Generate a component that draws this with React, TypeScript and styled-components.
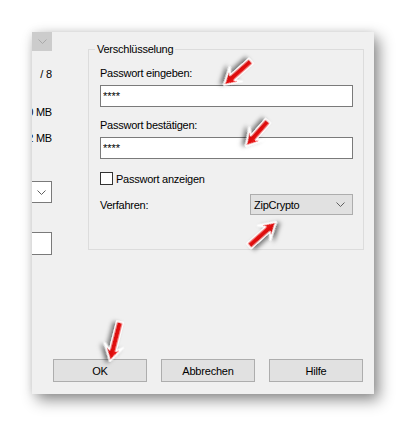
import * as React from 'react';
import styled, { createGlobalStyle } from 'styled-components';

const GlobalStyle = createGlobalStyle`
    html, body {
        margin: 0;
        padding: 0;
        background: #ffffff;
    }
    body {
        font-family: "Liberation Sans", Arial, sans-serif;
        font-size: 11px;
        color: #000000;
    }
`;

const Page = styled.div`
    position: relative;
    width: 406px;
    height: 426px;
    box-sizing: border-box;
    padding: 32px 0 0 32px;
    background: #ffffff;
    overflow: hidden;
`;

const Dialog = styled.div`
    width: 342px;
    height: 362px;
    display: flex;
    flex-direction: column;
    background: #f0f0f0;
    box-shadow: 5px 6px 14px rgba(0, 0, 0, 0.45), 0 0 8px rgba(0, 0, 0, 0.08);
`;

const TopArea = styled.div`
    display: flex;
    flex-direction: row;
    align-items: flex-start;
    gap: 36px;
`;

const LeftColumn = styled.div`
    width: 20px;
    flex-shrink: 0;
    display: flex;
    flex-direction: column;
    align-items: flex-end;
    overflow: hidden;
`;

const DisabledDrop = styled.div`
    width: 20px;
    height: 19px;
    display: flex;
    align-items: center;
    justify-content: center;
    background: #cccccc;
`;

const SideText = styled.div<{ $top: number }>`
    margin-top: ${(p) => p.$top}px;
    line-height: 14px;
    white-space: nowrap;
    letter-spacing: -0.2px;
`;

const SideCombo = styled.div<{ $top: number }>`
    margin-top: ${(p) => p.$top}px;
    width: 60px;
    height: 22px;
    box-sizing: border-box;
    display: flex;
    align-items: center;
    justify-content: flex-end;
    padding-right: 5px;
    background: #ffffff;
    border: 1px solid #7a7a7a;
`;

const SideField = styled.div<{ $top: number }>`
    margin-top: ${(p) => p.$top}px;
    width: 60px;
    height: 23px;
    box-sizing: border-box;
    background: #ffffff;
    border: 1px solid #7a7a7a;
`;

const GroupBox = styled.fieldset`
    margin: 10px 0 0 0;
    width: 276px;
    min-width: 0;
    box-sizing: border-box;
    border: 1px solid #dcdcdc;
    padding: 10px 10px 34px 11px;
    display: flex;
    flex-direction: column;
`;

const GroupTitle = styled.legend`
    margin-left: -5px;
    padding: 0 2px;
    line-height: 14px;
    font-size: 11px;
    letter-spacing: -0.25px;
`;

const FieldLabel = styled.div<{ $top?: number }>`
    margin-top: ${(p) => p.$top ?? 0}px;
    line-height: 14px;
    white-space: nowrap;
    letter-spacing: -0.25px;
`;

const PasswordBox = styled.input`
    margin: 5px 0 0 0;
    width: 100%;
    height: 22px;
    box-sizing: border-box;
    padding: 0 2px;
    border: 1px solid #7a7a7a;
    background: #ffffff;
    font-family: "Liberation Sans", Arial, sans-serif;
    font-size: 11px;
    color: #000000;
    outline: none;
`;

const CheckRow = styled.label`
    margin-top: 13px;
    display: flex;
    align-items: center;
    gap: 3px;
    height: 13px;
    white-space: nowrap;
    letter-spacing: -0.25px;
`;

const CheckBox = styled.span`
    width: 13px;
    height: 13px;
    box-sizing: border-box;
    border: 1px solid #333333;
    background: #ffffff;
`;

const MethodRow = styled.div`
    margin-top: 9px;
    display: flex;
    align-items: center;
    justify-content: space-between;
    letter-spacing: -0.25px;
`;

const Select = styled.div`
    width: 103px;
    height: 21px;
    box-sizing: border-box;
    display: flex;
    align-items: center;
    justify-content: space-between;
    padding: 0 7px 0 3px;
    background: #e1e1e1;
    border: 1px solid #adadad;
`;

const ButtonRow = styled.div`
    margin-top: auto;
    display: flex;
    flex-direction: row;
    gap: 14px;
    padding: 0 0 12px 21px;
`;

const Button = styled.button`
    width: 94px;
    height: 23px;
    box-sizing: border-box;
    padding: 0;
    background: #e1e1e1;
    border: 1px solid #adadad;
    font-family: "Liberation Sans", Arial, sans-serif;
    font-size: 11px;
    color: #000000;
    letter-spacing: -0.2px;
`;

const Overlay = styled.svg`
    position: absolute;
    left: 0;
    top: 0;
    pointer-events: none;
`;

const Chevron = ({ color = '#606060' }: { color?: string }) => (
    <svg width="9" height="5" viewBox="0 0 9 5">
        <polyline points="0.5,0.5 4.5,4.5 8.5,0.5" fill="none" stroke={color} strokeWidth="1" />
    </svg>
);

type ArrowSpec = { tail: [number, number]; tip: [number, number] };

const arrows: ArrowSpec[] = [
    { tail: [251, 61], tip: [224, 85] },
    { tail: [268, 121], tip: [246, 146] },
    { tail: [249, 246], tip: [276, 222] },
    { tail: [120, 322], tip: [110, 361] },
];

const RedArrow = ({ tail, tip }: ArrowSpec) => {
    const dx = tip[0] - tail[0];
    const dy = tip[1] - tail[1];
    const len = Math.sqrt(dx * dx + dy * dy);
    const angle = (Math.atan2(dy, dx) * 180) / Math.PI;
    const pts = [
        [0, -3.3],
        [len - 11, -3.3],
        [len - 16, -9.5],
        [len, 0],
        [len - 16, 9.5],
        [len - 11, 3.3],
        [0, 3.3],
    ]
        .map((p) => p.join(','))
        .join(' ');
    return (
        <g transform={`translate(${tail[0]} ${tail[1]}) rotate(${angle})`} filter="url(#arrowShadow)">
            <polygon points={pts} fill="url(#arrowRed)" stroke="#ffffff" strokeWidth="1.6" strokeLinejoin="round" />
        </g>
    );
};

export default function App() {
    return (
        <>
            <GlobalStyle />
            <Page>
                <Dialog>
                    <TopArea>
                        <LeftColumn>
                            <DisabledDrop>
                                <Chevron color="#a9a9a9" />
                            </DisabledDrop>
                            <SideText $top={16}>/ 8</SideText>
                            <SideText $top={24}>0 MB</SideText>
                            <SideText $top={12}>2 MB</SideText>
                            <SideCombo $top={36}>
                                <Chevron />
                            </SideCombo>
                            <SideField $top={29} />
                        </LeftColumn>
                        <GroupBox>
                            <GroupTitle>Verschlüsselung</GroupTitle>
                            <FieldLabel>Passwort eingeben:</FieldLabel>
                            <PasswordBox readOnly value="****" />
                            <FieldLabel $top={11}>Passwort bestätigen:</FieldLabel>
                            <PasswordBox readOnly value="****" />
                            <CheckRow>
                                <CheckBox />
                                Passwort anzeigen
                            </CheckRow>
                            <MethodRow>
                                <span>Verfahren:</span>
                                <Select>
                                    <span>ZipCrypto</span>
                                    <Chevron />
                                </Select>
                            </MethodRow>
                        </GroupBox>
                    </TopArea>
                    <ButtonRow>
                        <Button>OK</Button>
                        <Button>Abbrechen</Button>
                        <Button>Hilfe</Button>
                    </ButtonRow>
                </Dialog>
                <Overlay width="406" height="426" viewBox="0 0 406 426">
                    <defs>
                        <linearGradient id="arrowRed" x1="0" y1="0" x2="0" y2="1">
                            <stop offset="0" stopColor="#ff2020" />
                            <stop offset="1" stopColor="#c00000" />
                        </linearGradient>
                        <filter id="arrowShadow" x="-50%" y="-50%" width="200%" height="200%">
                            <feDropShadow dx="2" dy="3" stdDeviation="2" floodColor="#000000" floodOpacity="0.5" />
                        </filter>
                    </defs>
                    {arrows.map((a, i) => (
                        <RedArrow key={i} {...a} />
                    ))}
                </Overlay>
            </Page>
        </>
    );
}
